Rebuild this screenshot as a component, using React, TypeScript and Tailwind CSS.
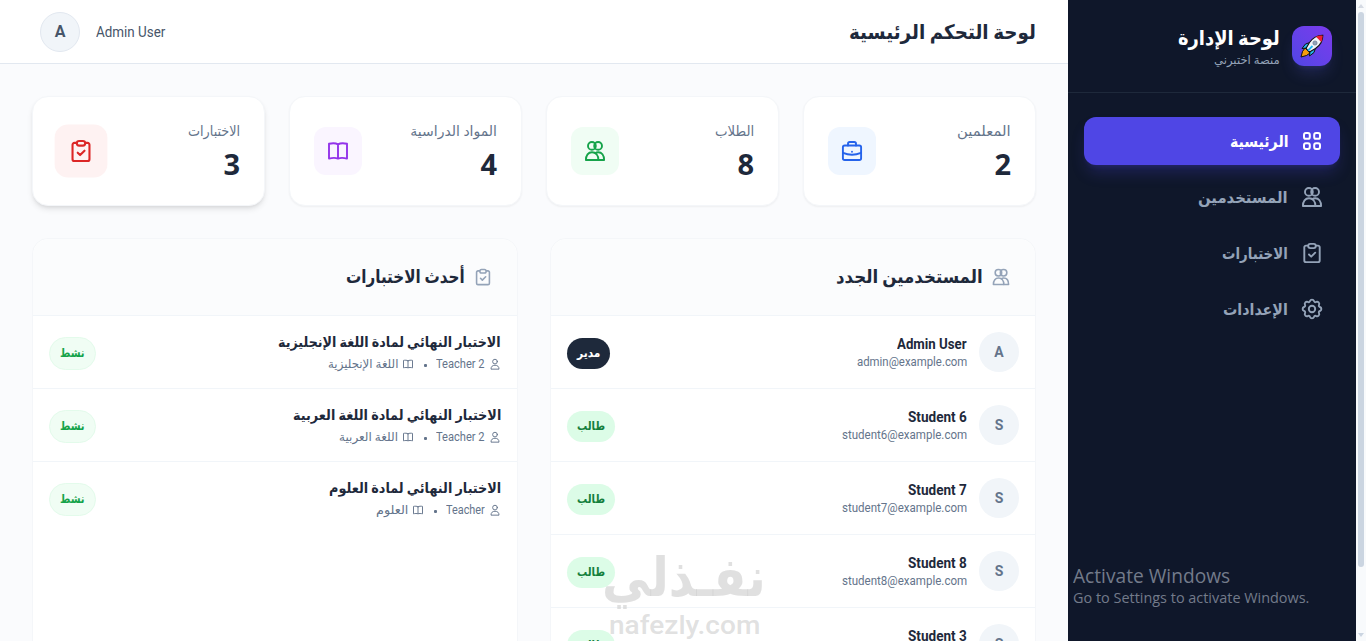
import { ReactNode, useLayoutEffect, useRef, useState } from "react";
import clsx from "clsx";

type IconProps = { className?: string; strokeWidth?: number };

const Svg = ({
  className,
  strokeWidth = 1.9,
  children,
}: IconProps & { children: ReactNode }) => (
  <svg
    viewBox="0 0 24 24"
    fill="none"
    stroke="currentColor"
    strokeWidth={strokeWidth}
    strokeLinecap="round"
    strokeLinejoin="round"
    className={clsx("shrink-0", className)}
  >
    {children}
  </svg>
);

const GridIcon = (props: IconProps) => (
  <Svg {...props} strokeWidth={2}>
    <rect x="4" y="4" width="5.8" height="5.8" rx="1.9" />
    <rect x="14.200" y="4" width="5.8" height="5.8" rx="1.9" />
    <rect x="4" y="14.200" width="5.8" height="5.8" rx="1.9" />
    <rect x="14.200" y="14.200" width="5.8" height="5.8" rx="1.9" />
  </Svg>
);

const UsersIcon = (props: IconProps) => (
  <Svg {...props}>
    <circle cx="8.900" cy="6.900" r="3.900" />
    <circle cx="15.100" cy="6.900" r="3.900" />
    <path d="M2.900 21c0-4.800 2.400-7.800 6.100-7.800s6.400 3 6.400 7.800z" />
    <path d="M12.200 14.200c.9-.7 1.900-1 3-1 3.500 0 5.900 3 5.900 7.800h-5.700" />
  </Svg>
);

const ClipboardIcon = (props: IconProps) => (
  <Svg {...props}>
    <path d="M8 4.600H6a1.700 1.700 0 0 0-1.700 1.700V19.400A1.700 1.700 0 0 0 6 21.100h12a1.700 1.700 0 0 0 1.700-1.700V6.300A1.700 1.700 0 0 0 18 4.600h-2" />
    <rect x="8.200" y="2.900" width="7.600" height="4.200" rx="2.100" />
    <path d="m9 13.500 2.200 2.200 4-4" />
  </Svg>
);

const BriefcaseIcon = (props: IconProps) => (
  <Svg {...props}>
    <path d="M8 6.500V4.800a1.800 1.800 0 0 1 1.800-1.800h4.400a1.800 1.800 0 0 1 1.800 1.800v1.700" />
    <rect x="2.900" y="6.500" width="18.200" height="14.500" rx="1.800" />
    <path d="M3 13.800c5.500 2.300 12.500 2.300 18 0M12 12.700v.1" />
  </Svg>
);

const BookIcon = (props: IconProps) => (
  <Svg {...props}>
    <path d="M12 5.400v14M12 5.400c-2-1.200-6-1.300-9-.6v14.800c3-.8 7-.8 9 0 2-.8 6-.8 9 0V4.800c-3-.7-7-.6-9 .6z" />
  </Svg>
);

const UserIcon = (props: IconProps) => (
  <Svg {...props}>
    <circle cx="12" cy="7.200" r="4.700" />
    <path d="M4 21.500c0-4.500 3-7 8-7s8 2.500 8 7z" />
  </Svg>
);

const gearPath = () => {
  const point = (deg: number, r: number) => {
    const a = (deg * Math.PI) / 180;
    return `${(12 + r * Math.cos(a)).toFixed(2)} ${(12 + r * Math.sin(a)).toFixed(2)}`;
  };
  let d = `M${point(-14, 8.2)}`;
  for (let k = 0; k < 8; k++) {
    d += `A2.100 2.100 0 0 1 ${point(k * 45 + 14, 8.2)}`;
    d += `Q${point(k * 45 + 22.5, 6.8)} ${point(k * 45 + 31, 8.2)}`;
  }
  return d + "Z";
};

const GearIcon = (props: IconProps) => (
  <Svg {...props}>
    <path d={gearPath()} />
    <circle cx="12" cy="12" r="3.200" />
  </Svg>
);

const Rocket = () => (
  <svg viewBox="0 0 24 24" className="size-6">
    <path d="M5 14 2.500 17.500 1 23l5.500-1.500L10 19z" fill="#f59e0b" stroke="#111" strokeWidth="1" />
    <path d="M10 8.500 5.500 10 2 14.500l5-.5zM15.500 14 14 18.500 9.500 22l.5-5z" fill="#22b8f0" stroke="#111" strokeWidth="1" />
    <path d="M22.800 1.200c-6-.2-10 2.600-13.300 7.300L6 14.500 9.500 18l6-3.500c4.700-3.300 7.500-7.300 7.300-13.300z" fill="#f1f5f9" stroke="#111" strokeWidth="1.100" />
    <path d="M22.500 1.500c-2.600-.1-4.500.3-6.500 1.300l5.200 5.200c1-2 1.400-4 1.300-6.500z" fill="#ef1c35" />
    <circle cx="15" cy="9" r="2.100" fill="#94a3b8" stroke="#64748b" strokeWidth=".7" />
    <path d="m8 16.500 4.500-4.500" stroke="#22b8f0" strokeWidth="1.800" />
  </svg>
);

// Squeezes or stretches a single line of text to the given width.
const FitText = ({
  width,
  className,
  dir = "rtl",
  children,
}: {
  width: number;
  className?: string;
  dir?: "rtl" | "ltr";
  children: ReactNode;
}) => {
  const ref = useRef<HTMLSpanElement>(null);
  const [scale, setScale] = useState(1);

  useLayoutEffect(() => {
    if (ref.current) setScale(width / ref.current.offsetWidth);
  }, [width]);

  return (
    <span dir={dir} className={clsx("block whitespace-nowrap", className)} style={{ width }}>
      <span
        ref={ref}
        className={clsx("inline-block", dir === "rtl" ? "origin-right" : "origin-left")}
        style={{ transform: `scaleX(${scale})` }}
      >
        {children}
      </span>
    </span>
  );
};

const navItems = [
  { label: "الرئيسية", width: 59, icon: GridIcon, active: true },
  { label: "المستخدمين", width: 90, icon: UsersIcon },
  { label: "الاختبارات", width: 66, icon: ClipboardIcon },
  { label: "الإعدادات", width: 65, icon: GearIcon },
];

const stats = [
  { label: "المعلمين", width: 54, value: 2, icon: BriefcaseIcon, color: "bg-[#eff6ff] text-[#2563eb]" },
  { label: "الطلاب", width: 39, value: 8, icon: UsersIcon, color: "bg-[#f0fdf4] text-[#16a34a]" },
  { label: "المواد الدراسية", width: 87, value: 4, icon: BookIcon, color: "bg-[#faf5ff] text-[#9333ea]" },
  { label: "الاختبارات", width: 52, value: 3, icon: ClipboardIcon, color: "bg-[#fef2f2] text-[#dc2626]", raised: true },
];

const users = [
  { name: "Admin User", email: "admin@example.com", admin: true },
  { name: "Student 6", email: "student6@example.com" },
  { name: "Student 7", email: "student7@example.com" },
  { name: "Student 8", email: "student8@example.com" },
  { name: "Student 3", email: "student3@example.com" },
];

const exams = [
  {
    title: "الاختبار النهائي لمادة اللغة الإنجليزية",
    width: 223,
    teacher: "Teacher 2",
    teacherWidth: 49,
    subject: "اللغة الإنجليزية",
    subjectWidth: 70,
  },
  {
    title: "الاختبار النهائي لمادة اللغة العربية",
    width: 208,
    teacher: "Teacher 2",
    teacherWidth: 49,
    subject: "اللغة العربية",
    subjectWidth: 59,
  },
  {
    title: "الاختبار النهائي لمادة العلوم",
    width: 172,
    teacher: "Teacher",
    teacherWidth: 39,
    subject: "العلوم",
    subjectWidth: 32,
  },
];

const Sidebar = () => (
  <aside className="flex w-72 shrink-0 flex-col bg-[#0f172a]">
    <div className="flex items-center gap-3 border-b border-[#1e293b] p-6">
      <div className="flex size-10 items-center justify-center rounded-xl bg-linear-to-tr from-[#4f46e5] to-[#7c3aed] shadow-lg shadow-[#6366f1]/20">
        <Rocket />
      </div>
      <div>
        <FitText width={102} className="text-xl leading-7 font-bold text-white">
          لوحة الإدارة
        </FitText>
        <FitText width={66} className="text-xs text-[#94a3b8]">
          منصة اختبرني
        </FitText>
      </div>
    </div>
    <nav className="flex flex-col gap-2 px-4 py-6">
      {navItems.map(({ label, width, icon: Icon, active }) => (
        <a
          key={label}
          className={clsx(
            "flex h-12 items-center gap-3 rounded-xl px-4",
            active
              ? "bg-[#4f46e5] text-white shadow-lg shadow-[#4f46e5]/25"
              : "text-[#94a3b8]"
          )}
        >
          <Icon className="size-6" />
          <FitText width={width} className="pt-px font-bold">
            {label}
          </FitText>
        </a>
      ))}
    </nav>
    <div dir="ltr" className="mt-auto px-[5px] pb-[33px] font-['Open_Sans',sans-serif] text-[#737b8a]">
      <FitText dir="ltr" width={157} className="text-xl leading-6">
        Activate Windows
      </FitText>
      <FitText dir="ltr" width={236} className="text-sm leading-5">
        Go to Settings to activate Windows.
      </FitText>
    </div>
  </aside>
);

const Header = () => (
  <header className="flex h-16 shrink-0 items-center justify-between border-b border-[#e2e8f0] bg-white px-8">
    <FitText width={187} className="text-xl leading-7 font-bold text-[#1e293b]">
      لوحة التحكم الرئيسية
    </FitText>
    <div className="flex items-center gap-4 pl-2">
      <FitText dir="ltr" width={69} className="text-sm text-[#475569]">
        Admin User
      </FitText>
      <div className="flex size-10 items-center justify-center rounded-full border border-[#e2e8f0] bg-[#f1f5f9] font-bold text-[#475569]">
        A
      </div>
    </div>
  </header>
);

const Panel = ({
  title,
  width,
  icon,
  children,
}: {
  title: string;
  width: number;
  icon: ReactNode;
  children: ReactNode;
}) => (
  <section className="min-w-0 flex-1 rounded-2xl border border-[#f4f6f9] bg-white">
    <div className="flex items-center gap-2 rounded-t-2xl border-b border-[#f1f5f9] bg-[#fbfcfd] p-6 text-[#94a3b8]">
      {icon}
      <FitText width={width} className="text-lg leading-7 font-bold text-[#1e293b]">
        {title}
      </FitText>
    </div>
    {children}
  </section>
);

const App = () => {
  return (
    <div
      dir="rtl"
      className="relative flex h-[641px] w-[1366px] overflow-hidden bg-[#fafbfd] font-[Roboto,'DejaVu_Sans',sans-serif]"
    >
      <div className="flex w-2.5 shrink-0 flex-col items-center bg-[#f8fafc] pt-1">
        <div className="border-x-[3px] border-b-4 border-x-transparent border-b-[#d5dae3]" />
        <div className="mt-1 h-[555px] w-1.5 rounded-full bg-[#cbd5e1]" />
        <div className="mt-auto mb-1 border-x-[3px] border-t-4 border-x-transparent border-t-[#cbd5e1]" />
      </div>
      <Sidebar />
      <div className="flex min-w-0 flex-1 flex-col">
        <Header />
        <main className="flex flex-1 flex-col gap-8 overflow-hidden p-8">
          <div className="grid shrink-0 grid-cols-4 gap-6">
            {stats.map(({ label, width, value, icon: Icon, color, raised }) => (
              <div
                key={label}
                className={clsx(
                  "flex items-center justify-between rounded-2xl border border-[#f4f6f9] bg-white p-6",
                  raised ? "shadow-md" : "shadow-xs"
                )}
              >
                <div>
                  <FitText width={width} className="text-sm text-[#64748b]">
                    {label}
                  </FitText>
                  <p className="mt-[5px] -mb-px font-['Open_Sans',sans-serif] text-[29px] leading-9 font-bold text-[#1e293b]">
                    {value}
                  </p>
                </div>
                <div
                  className={clsx(
                    "flex size-12 items-center justify-center rounded-xl",
                    color,
                    raised && "scale-110"
                  )}
                >
                  <Icon className="size-6" />
                </div>
              </div>
            ))}
          </div>

          <div className="flex shrink-0 gap-8">
            <Panel
              title="المستخدمين الجدد"
              width={147}
              icon={<UsersIcon className="size-5" />}
            >
              {users.map((user) => (
                <div
                  key={user.email}
                  className="flex h-[73px] items-center justify-between border-b border-[#f1f5f9] px-4"
                >
                  <div className="flex items-center gap-3">
                    <div className="flex size-10 items-center justify-center rounded-full bg-[#f1f5f9] text-sm font-bold text-[#64748b]">
                      {user.name[0]}
                    </div>
                    <div className="flex flex-col items-start">
                      <FitText
                        dir="ltr"
                        width={user.admin ? 70 : 59}
                        className="text-sm font-bold text-[#1e293b]"
                      >
                        {user.name}
                      </FitText>
                      <FitText
                        dir="ltr"
                        width={user.admin ? 110 : 125}
                        className="text-xs text-[#64748b]"
                      >
                        {user.email}
                      </FitText>
                    </div>
                  </div>
                  <div
                    className={clsx(
                      "mt-0.5 flex h-[31px] items-center rounded-full px-2.5 text-xs font-bold",
                      user.admin ? "bg-[#1e293b] text-white" : "bg-[#dcfce7] text-[#15803d]"
                    )}
                  >
                    <FitText width={user.admin ? 23 : 28}>{user.admin ? "مدير" : "طالب"}</FitText>
                  </div>
                </div>
              ))}
            </Panel>

            <Panel
              title="أحدث الاختبارات"
              width={119}
              icon={<ClipboardIcon className="size-5" />}
            >
              {exams.map((exam, index) => (
                <div
                  key={exam.title}
                  className={clsx(
                    "flex h-[73px] items-center justify-between border-b px-4",
                    index < exams.length - 1 ? "border-[#f1f5f9]" : "border-transparent"
                  )}
                >
                  <div>
                    <FitText width={exam.width} className="mb-1 text-sm font-bold text-[#1e293b]">
                      {exam.title}
                    </FitText>
                    <div className="flex items-center gap-2 text-xs text-[#64748b]">
                      <div className="flex items-center gap-1">
                        <UserIcon className="size-3" />
                        <FitText dir="ltr" width={exam.teacherWidth}>
                          {exam.teacher}
                        </FitText>
                      </div>
                      <span className="mx-[1.5px] mt-0.5 size-[3px] rounded-[1px] bg-[#64748b]" />
                      <div className="flex items-center gap-1">
                        <BookIcon className="size-3" />
                        <FitText width={exam.subjectWidth}>{exam.subject}</FitText>
                      </div>
                    </div>
                  </div>
                  <div className="mt-0.5 flex h-[33px] items-center rounded-full border border-[#e3fbeb] bg-[#f0fdf4] px-2.5 text-xs font-bold text-[#16a34a]">
                    <FitText width={25}>نشط</FitText>
                  </div>
                </div>
              ))}
            </Panel>
          </div>
        </main>
      </div>

      <div className="absolute top-[546px] left-[602px] flex flex-col items-center font-bold text-[#cfcfcf]/65">
        <FitText width={164} className="text-[54px] leading-[64px]">
          نفـذلي
        </FitText>
        <FitText dir="ltr" width={151} className="text-[26px] leading-[30px] font-medium">
          nafezly.com
        </FitText>
      </div>
    </div>
  );
};

export default App;
